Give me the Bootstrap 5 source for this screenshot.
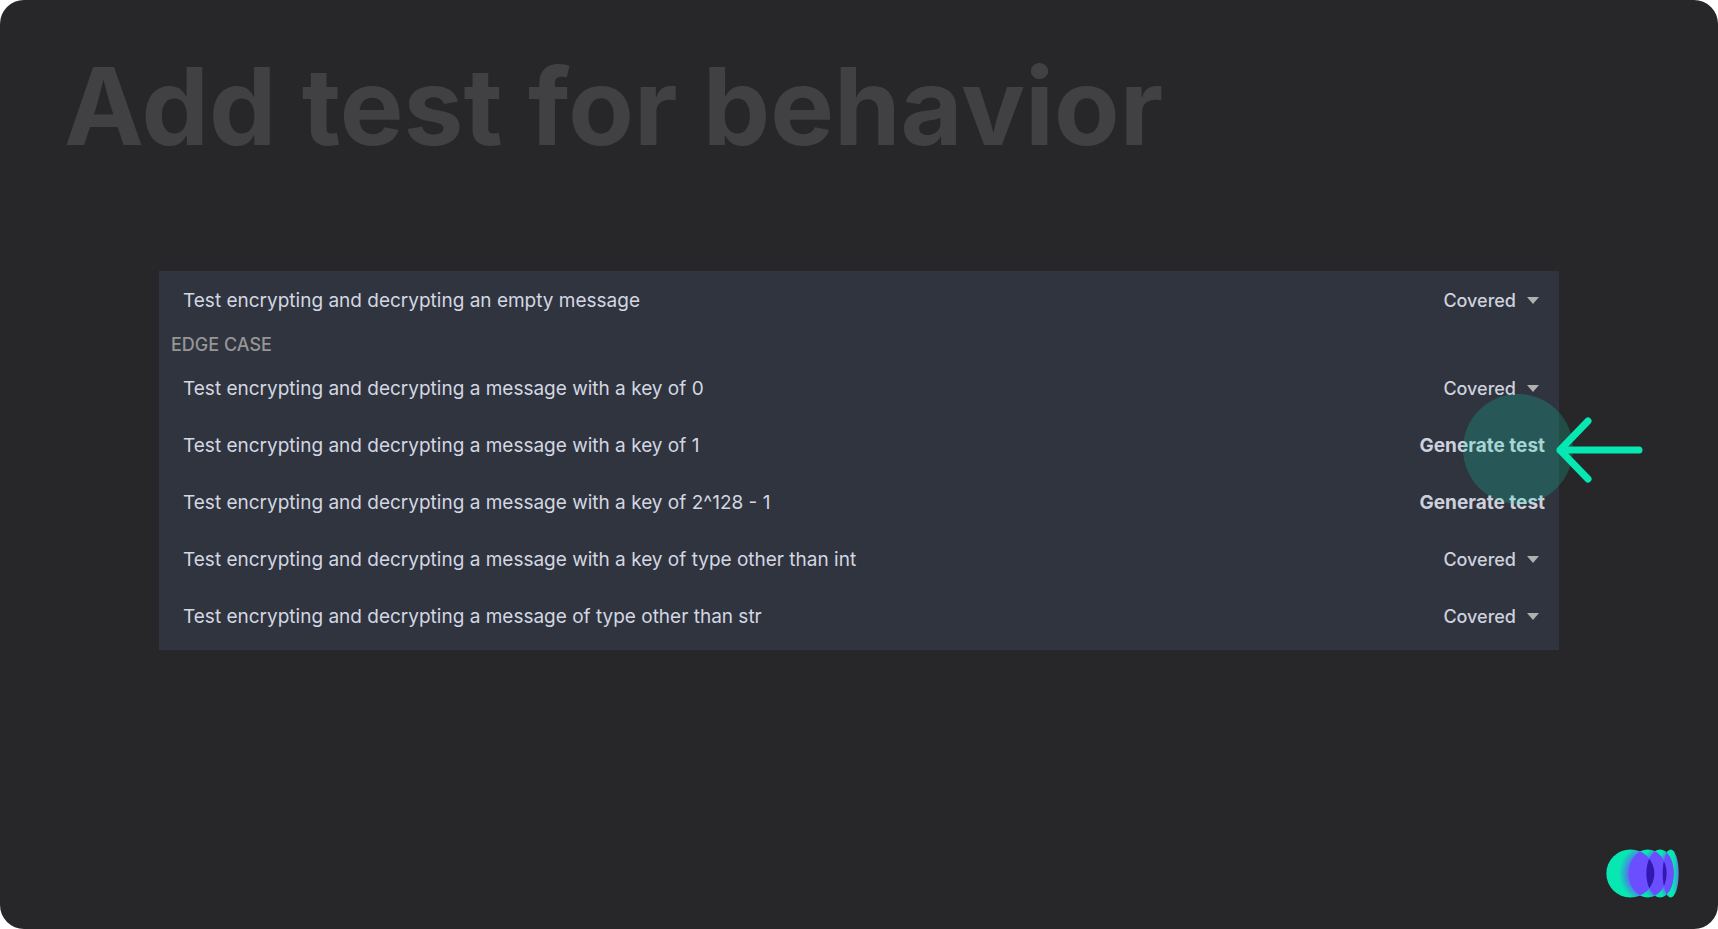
<!DOCTYPE html>
<html lang="en">
<head>
<meta charset="utf-8">
<meta name="viewport" content="width=device-width, initial-scale=1">
<title>Add test for behavior</title>
<link href="https://cdn.jsdelivr.net/npm/bootstrap@5.3.0/dist/css/bootstrap.min.css" rel="stylesheet">
<style>
  body { background: #fff; font-family: Inter, "Liberation Sans", sans-serif; }
  .slide { background: #272729; border-radius: 24px; }
  .slide-title { color: #414143; font-size: 107px; line-height: 130px; padding: 41px 64px 0; }
  .behaviors { margin: 100px 159px 0; padding: 1px 0 5px; background: #30343f; color: #d3d7e2; font-size: 19px; line-height: 26px; font-weight: 400; }
  .behavior { height: 57px; padding: 0 14px 0 24px; }
  .group-name { height: 31px; padding-left: 12px; color: #969696; font-size: 18px; line-height: 32px; font-weight: 500; }
  .behavior button { color: #cdd1dd; line-height: 26px; }
  .behavior .status { font-size: 18px; margin-right: 6px; gap: 11px; }
  .behavior .generate { font-size: 19px; font-weight: 700; }
  .halo { width: 110px; height: 110px; right: -28px; top: 50%; margin-top: -52px; border-radius: 50%; background: #06e7b2; opacity: .2; pointer-events: none; }
  .pointer { left: 100%; top: 50%; margin: -29px 0 0 8px; pointer-events: none; }
  .brand { padding: 0 39px 31px 0; }
</style>
</head>
<body>
<main class="slide min-vh-100 d-flex flex-column overflow-hidden">
  <h1 class="slide-title fw-bold m-0">Add test for behavior</h1>

  <section class="behaviors">
    <ul class="list-unstyled m-0">
      <li class="behavior d-flex align-items-center justify-content-between"><span>Test encrypting and decrypting an empty message</span>
        <button type="button" class="status btn p-0 border-0 fw-medium d-flex align-items-center">Covered<svg width="12" height="7" aria-hidden="true"><path d="M0 0H12L6 7Z" fill="#b0b0b0"/></svg></button></li>
    </ul>
    <h2 class="group-name m-0">EDGE CASE</h2>
    <ul class="list-unstyled m-0">
      <li class="behavior d-flex align-items-center justify-content-between"><span>Test encrypting and decrypting a message with a key of 0</span>
        <button type="button" class="status btn p-0 border-0 fw-medium d-flex align-items-center">Covered<svg width="12" height="7" aria-hidden="true"><path d="M0 0H12L6 7Z" fill="#b0b0b0"/></svg></button></li>
      <li class="behavior d-flex align-items-center justify-content-between"><span>Test encrypting and decrypting a message with a key of 1</span>
        <div class="position-relative">
          <button type="button" class="generate btn p-0 border-0 d-block">Generate test</button>
          <span class="halo position-absolute"></span>
          <svg class="pointer position-absolute" width="90" height="66" viewBox="0 0 90 66" fill="none" stroke="#06e7b2" stroke-width="7" stroke-linecap="round" stroke-linejoin="round" aria-hidden="true"><path d="M35 4L7 33L35 62M7 33H86"/></svg>
        </div></li>
      <li class="behavior d-flex align-items-center justify-content-between"><span>Test encrypting and decrypting a message with a key of 2^128 - 1</span>
        <button type="button" class="generate btn p-0 border-0">Generate test</button></li>
      <li class="behavior d-flex align-items-center justify-content-between"><span>Test encrypting and decrypting a message with a key of type other than int</span>
        <button type="button" class="status btn p-0 border-0 fw-medium d-flex align-items-center">Covered<svg width="12" height="7" aria-hidden="true"><path d="M0 0H12L6 7Z" fill="#b0b0b0"/></svg></button></li>
      <li class="behavior d-flex align-items-center justify-content-between"><span>Test encrypting and decrypting a message of type other than str</span>
        <button type="button" class="status btn p-0 border-0 fw-medium d-flex align-items-center">Covered<svg width="12" height="7" aria-hidden="true"><path d="M0 0H12L6 7Z" fill="#b0b0b0"/></svg></button></li>
    </ul>
  </section>

  <footer class="brand mt-auto d-flex justify-content-end">
    <svg width="73" height="49" viewBox="0 0 219 147" role="img" aria-label="Logo">
      <defs>
        <radialGradient id="glow"><stop offset=".55" stop-color="#6b4eff"/><stop offset="1" stop-color="#6b4eff" stop-opacity="0"/></radialGradient>
        <linearGradient id="rim"><stop offset=".65" stop-color="#06e7b2"/><stop offset="1" stop-color="#4a8fe0"/></linearGradient>
        <clipPath id="c1"><circle cx="73" cy="73.500" r="72"/></clipPath>
        <clipPath id="c2"><ellipse cx="125" cy="73.500" rx="57" ry="72"/></clipPath>
        <clipPath id="c3"><ellipse cx="162" cy="73.500" rx="41" ry="72"/></clipPath>
      </defs>
      <g fill="#06e7b2">
        <circle cx="73" cy="73.500" r="72"/>
        <ellipse cx="125" cy="73.500" rx="57" ry="72"/>
        <ellipse cx="162" cy="73.500" rx="41" ry="72"/>
      </g>
      <ellipse cx="194" cy="73.500" rx="24" ry="72" fill="url(#rim)"/>
      <g fill="url(#glow)">
        <ellipse cx="125" cy="73.500" rx="86" ry="90" clip-path="url(#c1)"/>
        <ellipse cx="162" cy="73.500" rx="60" ry="86" clip-path="url(#c2)"/>
        <ellipse cx="194" cy="73.500" rx="38" ry="84" clip-path="url(#c3)"/>
      </g>
      <g fill="#6b4eff">
        <ellipse cx="125" cy="73.500" rx="57" ry="72" clip-path="url(#c1)"/>
        <ellipse cx="162" cy="73.500" rx="41" ry="72" clip-path="url(#c2)"/>
        <ellipse cx="194" cy="73.500" rx="24" ry="72" clip-path="url(#c3)"/>
      </g>
      <g fill="#3318b0">
        <ellipse cx="162" cy="73.500" rx="41" ry="72" clip-path="url(#c1)"/>
        <ellipse cx="194" cy="73.500" rx="24" ry="72" clip-path="url(#c2)"/>
      </g>
    </svg>
  </footer>
</main>
<script src="https://cdn.jsdelivr.net/npm/bootstrap@5.3.0/dist/js/bootstrap.bundle.min.js"></script>
</body>
</html>
